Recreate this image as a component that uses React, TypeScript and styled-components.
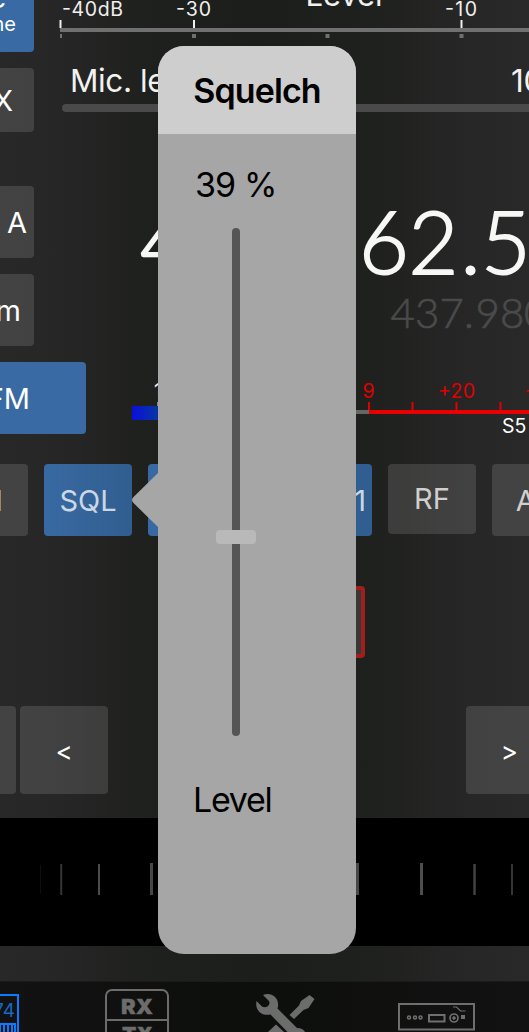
import React from "react";
import styled, { createGlobalStyle } from "styled-components";

const Global = createGlobalStyle`
  html, body { margin: 0; padding: 0; background: #222321; }
  *, *::before, *::after { box-sizing: border-box; }
  body { font-family: Inter, "Liberation Sans", sans-serif; }
  svg { display: block; }
`;

const Screen = styled.div`
  position: relative;
  width: 529px;
  height: 1032px;
  overflow: hidden;
  display: flex;
  flex-direction: column;
  background: linear-gradient(90deg, #282828 0, #272727 40px, #1e201d 158px, #1c1e1b 257px, #1e201d 356px, #272727 480px, #292929 529px);
`;

const TopPanel = styled.div`
  display: flex;
  height: 362px;
`;

const SideButtons = styled.div`
  display: flex;
  flex-direction: column;
  width: 34px;
  flex: none;
`;

type Tone = "blue" | "grey";

const Key = styled.div<{
  $tone?: Tone;
  $w: number;
  $h: number;
  $mt?: number;
  $pad?: number;
  $drop?: number;
  $lift?: number;
  $size?: number;
  $align?: string;
  $dim?: boolean;
  $corners?: string;
}>`
  display: flex;
  flex: none;
  align-items: center;
  justify-content: ${(p) => p.$align ?? "center"};
  width: ${(p) => p.$w}px;
  height: ${(p) => p.$h}px;
  margin-top: ${(p) => p.$mt ?? 0}px;
  padding-right: ${(p) => p.$pad ?? 0}px;
  padding-top: ${(p) => p.$drop ?? 0}px;
  padding-bottom: ${(p) => p.$lift ?? 0}px;
  border-radius: ${(p) => p.$corners ?? "4px"};
  overflow: hidden;
  white-space: nowrap;
  line-height: 1;
  font-size: ${(p) => p.$size ?? 29}px;
  color: ${(p) => (p.$dim ? "rgba(255,255,255,.75)" : "#fff")};
  background: ${(p) =>
    p.$tone === "blue" ? (p.$dim ? "linear-gradient(90deg, #3969a2, #305e90)" : "#3a6aa3") : "rgba(255,255,255,.125)"};
`;

const TwoLines = styled.div`
  display: flex;
  flex-direction: column;
  align-items: flex-end;
  margin-bottom: 36px;
  gap: 2px;
`;

const BigLine = styled.span`
  margin-right: -1px;
  padding-right: 11px;
  font-size: 29px;
`;

const Readouts = styled.div`
  display: flex;
  flex-direction: column;
  width: 495px;
`;

const MicRow = styled.div`
  display: flex;
  justify-content: space-between;
  height: 40px;
  padding: 0 0 0 36px;
  align-items: center;
  margin-top: 18px;
  font-size: 31.5px;
  letter-spacing: -0.4px;
  color: #f2f2f0;
  white-space: nowrap;
`;

const MicValue = styled.span`
  width: 18px;
  overflow: visible;
`;

const MicTrack = styled.div`
  height: 8px;
  margin: 4px 0 0 28px;
  border-radius: 4px 0 0 4px;
  background: #494a49;
`;

const MeterRow = styled.div`
  display: flex;
  height: 102px;
`;

const KeyRow = styled.div<{ $h: number; $gap?: number; $between?: boolean }>`
  display: flex;
  height: ${(p) => p.$h}px;
  gap: ${(p) => p.$gap ?? 16}px;
  flex: none;
  justify-content: ${(p) => (p.$between ? "space-between" : "flex-start")};
`;

const NavGroup = styled.div`
  display: flex;
  gap: 4px;
`;

const AlertBox = styled.div`
  width: 88px;
  height: 72px;
  margin-left: 277px;
  border: 4px solid #a01f1d;
  border-radius: 4px;
  background: #373837;
`;

const Dial = styled.div`
  height: 128px;
  flex: none;
  margin-top: 24px;
  background: #000;
`;

const TabBar = styled.div`
  flex: none;
  height: 51px;
  margin-top: 35px;
  overflow: hidden;
  border-top: 1px solid #1a1b1a;
  background: linear-gradient(90deg, #121212 0, #0d0f0c 250px, #121212 529px);
`;

const Popover = styled.div`
  position: absolute;
  left: 158px;
  top: 46px;
  width: 198px;
  height: 908px;
  display: flex;
  flex-direction: column;
  border-radius: 26px;
  background: #a6a6a6;
  color: #000;
`;

const PopoverArrow = styled.svg`
  position: absolute;
  left: -27px;
  top: 426px;
`;

const PopoverTitle = styled.div`
  display: flex;
  align-items: center;
  justify-content: center;
  height: 88px;
  border-radius: 26px 26px 0 0;
  background: #cdcecd;
  font-size: 34px;
  font-weight: 600;
  letter-spacing: -0.9px;
`;

const PopoverText = styled.div<{ $mt: number; $ml: number; $ls?: number }>`
  margin: ${(p) => p.$mt}px 0 0 ${(p) => p.$ml}px;
  height: 42px;
  line-height: 42px;
  font-size: 34px;
  letter-spacing: ${(p) => p.$ls ?? 0}px;
`;

const SliderTrack = styled.div`
  display: flex;
  justify-content: center;
  width: 8px;
  height: 508px;
  margin: 22px 0 0 74px;
  border-radius: 4px;
  background: #555;
`;

const SliderThumb = styled.div`
  flex: none;
  width: 40px;
  height: 14px;
  margin-top: 302px;
  border-radius: 4px;
  background: #b9b9b9;
`;

function LevelScale() {
  return (
    <svg width="495" height="42" viewBox="34 0 495 42" fill="#f0f0ee" fontSize="19.5">
      <text x="62" y="16" textLength="61">-40dB</text>
      <text x="176" y="16" textLength="35">-30</text>
      <text x="445" y="16" textLength="32">-10</text>
      <text x="305.500" y="6" fontSize="31" textLength="77">Level</text>
      <rect x="60" y="28" width="469" height="4" fill="#6f706f" />
      <path d="M60.5 20v8M194 20v8M461.500 20v8" stroke="#f0f0ee" strokeWidth="2" />
      <path d="M60 34h2v4h-2zM192 34h4v4h-4zM325.500 34h4v4h-4zM459.500 34h4v4h-4z" fill="#70716f" />
    </svg>
  );
}

function Frequency() {
  return (
    <svg width="495" height="250" viewBox="34 112 495 250" fontFamily="Lato, sans-serif" fontWeight="300">
      <g fontSize="86" fill="#f7f7f6" stroke="#f7f7f6" strokeWidth="1.900">
        <text x="140" y="274">4</text>
        <text x="359 408.500 460.500 481" y="274">62.5</text>
      </g>
      <text
        x="390.500 415 439.500 464 475.500 500 524"
        y="328"
        fontSize="42"
        fill="#4a4b4a"
        stroke="#4a4b4a"
        strokeWidth="0.700"
      >
        437.980
      </text>
    </svg>
  );
}

function SMeter() {
  return (
    <svg width="443" height="102" viewBox="86 362 443 102" fontSize="19.500">
      <defs>
        <linearGradient id="signal">
          <stop offset="0" stopColor="#0a10dc" />
          <stop offset="1" stopColor="#0737a0" />
        </linearGradient>
      </defs>
      <text x="154" y="398" fill="#eee">1</text>
      <rect x="157" y="402" width="2" height="8" fill="#888" />
      <rect x="132" y="406" width="27" height="14" fill="url(#signal)" />
      <rect x="350" y="410" width="19" height="4" fill="#666" />
      <rect x="369" y="410" width="160" height="4" fill="#e80000" />
      <path d="M369 402v8M412.500 402v8M456.500 402v8M500.500 402v8" stroke="#df0000" strokeWidth="2" />
      <g fill="#e00000">
        <text x="362.500" y="398">9</text>
        <text x="438" y="398" textLength="37">+20</text>
        <text x="524.500" y="398">+40</text>
      </g>
      <text x="502" y="432.500" fill="#fff">S5</text>
    </svg>
  );
}

function DialMarks() {
  return (
    <svg width="529" height="128" viewBox="0 818 529 128">
      <path d="M40.500 865v29" stroke="#0e0e0e" strokeWidth="1" />
      <path d="M61.200 864v31" stroke="#343534" strokeWidth="2" />
      <path d="M99 864v31" stroke="#4b4c4b" strokeWidth="2" />
      <path d="M151.500 863v32M357.500 863v32" stroke="#454645" strokeWidth="3" />
      <path d="M421.500 863v32" stroke="#4c4d4c" strokeWidth="3" />
      <path d="M474.500 864v31" stroke="#414241" strokeWidth="2.500" />
      <path d="M512 864v31" stroke="#343434" strokeWidth="2" />
    </svg>
  );
}

function TabIcons() {
  return (
    <svg width="529" height="50" viewBox="0 982 529 50" fill="none">
      <g stroke="#0a7aff" strokeWidth="2">
        <path d="M0 995h18v37M0 1024h15v8M0 1024v8M4 1024v8M8 1024v8M12 1024v8" />
      </g>
      <text x="-7" y="1017" fontSize="19" fill="#1668c8">74</text>
      <rect x="106" y="990" width="62" height="60" rx="6" stroke="#6c6c6c" strokeWidth="2" />
      <path d="M106 1020h62" stroke="#6c6c6c" strokeWidth="2" />
      <g fill="#6c6c6c" stroke="#6c6c6c" strokeWidth="0.300" fontSize="20" fontWeight="900">
        <text x="121" y="1014" textLength="32" lengthAdjust="spacingAndGlyphs">RX</text>
        <text x="122" y="1042" textLength="31" lengthAdjust="spacingAndGlyphs">TX</text>
      </g>
      <g fill="#6c6c6c">
        <path d="M263 995C272 991.500 280.500 999 277.500 1008.500L297 1028Q303 1028 305 1032H287.500L270.500 1014.500C262 1016.500 254.500 1010 256.500 1001L262 1006.500Q264.500 1008 267.500 1006.500Q270.500 1004 269 1001z" />
        <path d="M289.500 1015L299 1005.500L301 1001L309.500 995L314.500 999L308.500 1008L303.500 1010L294 1019z" />
        <path d="M268 1032l8-7.500 8 7.500z" />
      </g>
      <g stroke="#6f6f6f">
        <rect x="399" y="1004" width="75" height="25.500" strokeWidth="2" />
        <circle cx="409" cy="1017.500" r="1.500" strokeWidth="1.500" />
        <circle cx="415" cy="1017.500" r="1.500" strokeWidth="1.500" />
        <circle cx="420.500" cy="1017.500" r="1.500" strokeWidth="1.500" />
        <rect x="429" y="1015" width="15.500" height="6.500" strokeWidth="2" />
        <circle cx="454" cy="1018" r="4" strokeWidth="1.700" />
        <circle cx="454" cy="1018" r="1.300" fill="#6f6f6f" />
        <path d="M453 1007h3.500l4 4h5" strokeWidth="1.200" />
        <rect x="461.500" y="1015.500" width="3" height="3" fill="#6f6f6f" />
      </g>
    </svg>
  );
}

export default function App() {
  return (
    <>
      <Global />
      <Screen>
        <TopPanel>
          <SideButtons>
            <Key $tone="blue" $w={34} $h={52} $size={20} $align="flex-end" $pad={18} $corners="0 0 4px 0">
              <TwoLines>
                <BigLine>c</BigLine>
                <span>Tone</span>
              </TwoLines>
            </Key>
            <Key $w={34} $h={64} $mt={16} $align="flex-end" $pad={21} $corners="0 4px 4px 0">TX</Key>
            <Key $w={34} $h={72} $mt={54} $align="flex-end" $pad={7} $corners="0 4px 4px 0">A</Key>
            <Key $w={34} $h={72} $mt={16} $align="flex-end" $pad={13} $corners="0 4px 4px 0">m</Key>
          </SideButtons>
          <Readouts>
            <LevelScale />
            <MicRow>
              <span>Mic. level</span>
              <MicValue>100</MicValue>
            </MicRow>
            <MicTrack />
            <Frequency />
          </Readouts>
        </TopPanel>
        <MeterRow>
          <Key $tone="blue" $w={86} $h={72} $align="flex-end" $pad={56} $corners="0 4px 4px 0">FM</Key>
          <SMeter />
        </MeterRow>
        <KeyRow $h={122}>
          <Key $w={28} $h={72} $dim $align="flex-end" $pad={25} $corners="0 4px 4px 0">M</Key>
          <Key $tone="blue" $w={88} $h={72} $dim>SQL</Key>
          <Key $tone="blue" $w={224} $h={72} $dim $align="flex-end" $pad={6}>1</Key>
          <Key $w={88} $h={70} $dim $lift={2}>RF</Key>
          <Key $w={88} $h={72} $dim>AG</Key>
        </KeyRow>
        <KeyRow $h={120}>
          <AlertBox />
        </KeyRow>
        <KeyRow $h={88} $between>
          <NavGroup>
            <Key $w={16} $h={88} $corners="0 4px 4px 0" />
            <Key $w={88} $h={88} $size={26} $drop={4}>&lt;</Key>
          </NavGroup>
          <Key $w={63} $h={88} $size={26} $drop={4} $align="flex-end" $pad={11} $corners="4px 0 0 4px">&gt;</Key>
        </KeyRow>
        <Dial>
          <DialMarks />
        </Dial>
        <TabBar>
          <TabIcons />
        </TabBar>
        <Popover>
          <PopoverArrow width="28" height="56" viewBox="131 472 28 56">
            <path d="M159 472L133.500 497Q130.500 500 133.500 503L159 528z" fill="#a6a6a6" />
          </PopoverArrow>
          <PopoverTitle>Squelch</PopoverTitle>
          <PopoverText $mt={30} $ml={37} $ls={-0.9}>39 %</PopoverText>
          <SliderTrack>
            <SliderThumb />
          </SliderTrack>
          <PopoverText $mt={43} $ml={35} $ls={-1.3}>Level</PopoverText>
        </Popover>
      </Screen>
    </>
  );
}
